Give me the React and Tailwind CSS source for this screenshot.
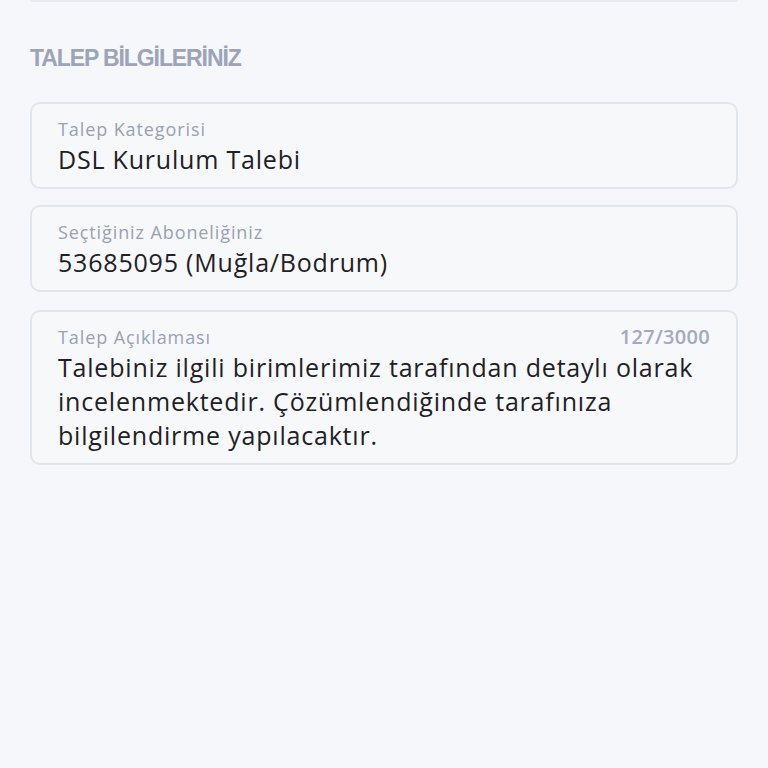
import React from "react";

const Field = ({ label, value, counter, className = "" }) => (
  <div
    className={`rounded-[10px] border-2 border-[#e1e5ec] bg-[#f7f8fa] px-[26px] pt-[12px] pb-[11px] ${className}`}
  >
    <div className="flex items-center justify-between">
      <span className="text-[18px] leading-[26px] tracking-[0.9px] text-[#9aa1b3]">
        {label}
      </span>
      {counter && (
        <span className="text-[20px] leading-[26px] font-semibold tracking-[0.3px] text-[#a3aabb]">
          {counter}
        </span>
      )}
    </div>
    <p className="text-[25px] leading-[34px] tracking-[0.8px] text-[#1f2125]">{value}</p>
  </div>
);

const App = () => {
  return (
    <div
      className="min-h-[768px] bg-[#f5f7fa] px-[30px]"
      style={{ fontFamily: "'Open Sans', 'Noto Sans', sans-serif" }}
    >
      {/* previous card, cut off at top */}
      <div className="h-[2px] rounded-b-[10px] border-b-2 border-[#e6e9ef]" />

      <h2
        className="mt-[42px] text-[23px] leading-[28px] font-bold tracking-[-1.1px] text-[#9ba4b8]"
        style={{ fontFamily: "'Liberation Sans', Arial, sans-serif" }}
      >
        TALEP BİLGİLERİNİZ
      </h2>

      <div className="mt-[30px] flex flex-col gap-[16px]">
        <Field label="Talep Kategorisi" value="DSL Kurulum Talebi" />
        <Field label="Seçtiğiniz Aboneliğiniz" value="53685095 (Muğla/Bodrum)" />
        {/* description field with char counter */}
        <Field
          className="mt-[2px]"
          label="Talep Açıklaması"
          counter="127/3000"
          value="Talebiniz ilgili birimlerimiz tarafından detaylı olarak incelenmektedir. Çözümlendiğinde tarafınıza bilgilendirme yapılacaktır."
        />
      </div>
    </div>
  );
};

export default App;
